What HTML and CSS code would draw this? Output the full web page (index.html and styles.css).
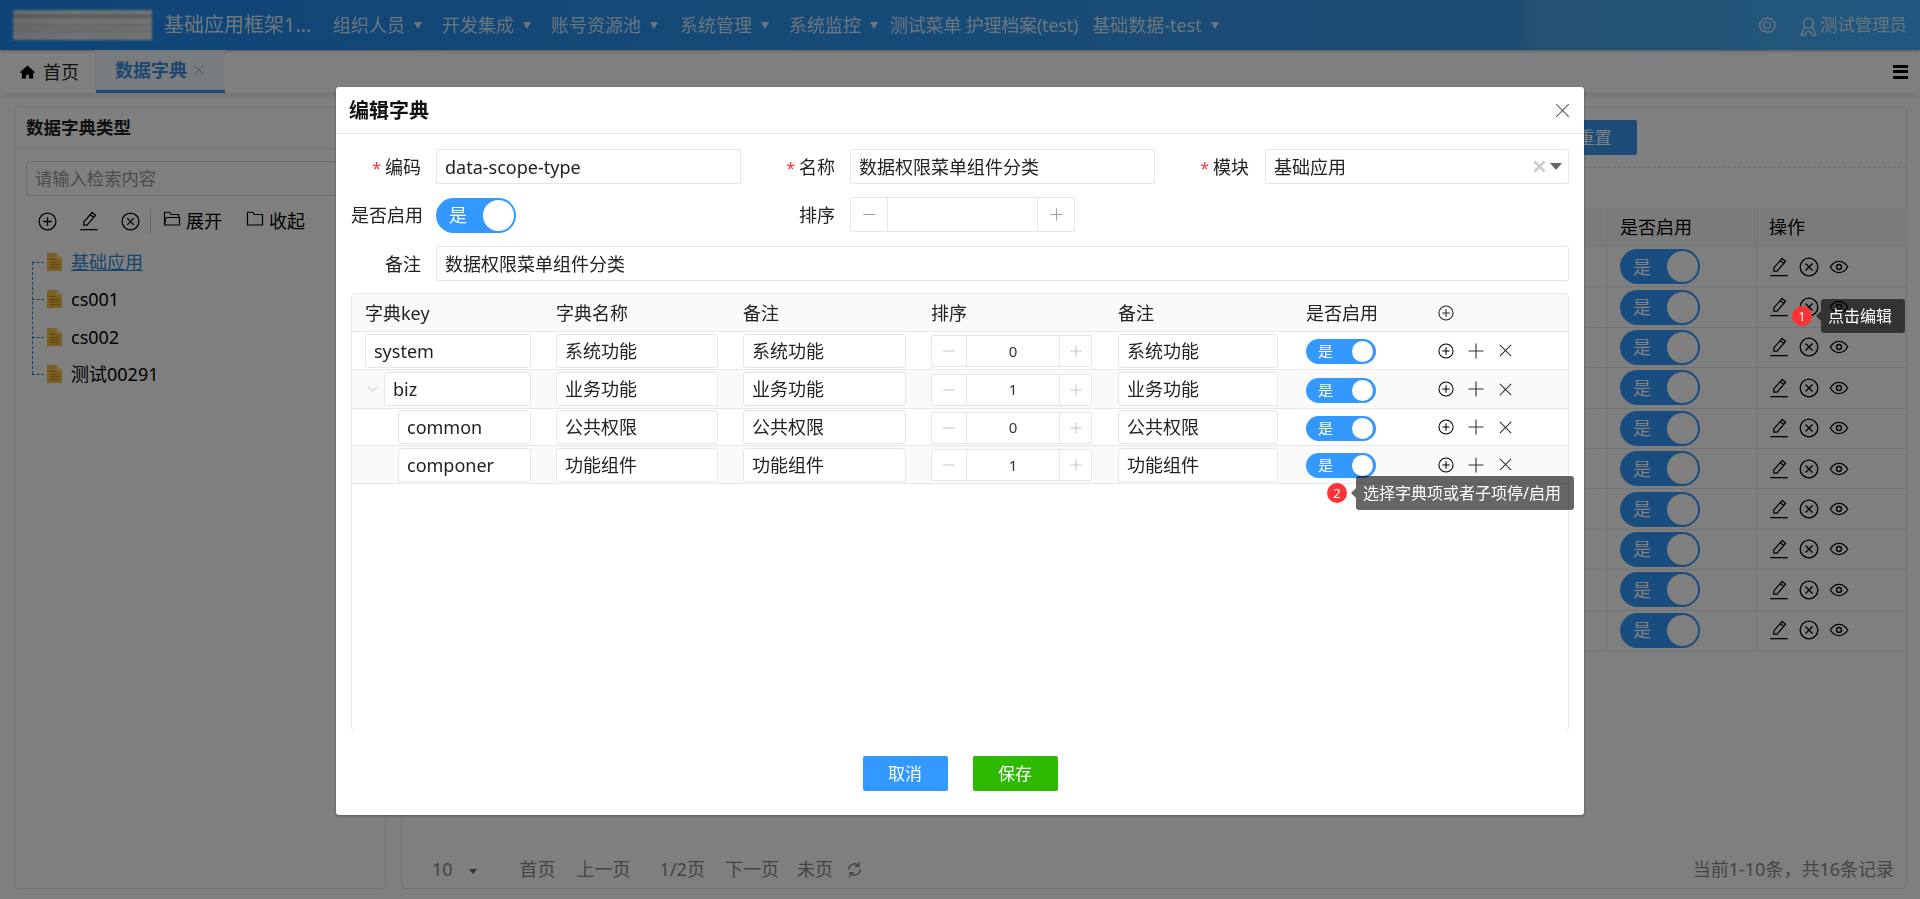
FILE: index.html
```html
<!DOCTYPE html>
<html lang="zh-CN">
<head>
<meta charset="utf-8">
<title>数据字典</title>
<link rel="stylesheet" href="styles.css">
</head>
<body>
<svg class="defs" width="0" height="0" aria-hidden="true">
  <symbol id="i-cplus" viewBox="0 0 24 24"><circle cx="12" cy="12" r="10.600" fill="none" stroke="currentColor" stroke-width="1.600"/><path d="M12 6.500v11M6.500 12h11" fill="none" stroke="currentColor" stroke-width="1.600"/></symbol>
  <symbol id="i-cx" viewBox="0 0 24 24"><circle cx="12" cy="12" r="10.600" fill="none" stroke="currentColor" stroke-width="1.600"/><path d="M7.800 7.800l8.400 8.400M16.200 7.800l-8.400 8.400" fill="none" stroke="currentColor" stroke-width="1.600"/></symbol>
  <symbol id="i-pen" viewBox="0 0 24 24"><path d="M15.800 1.800l4 3.400L9.600 17H5.800v-4zM13.600 4.400l4 3.400" fill="none" stroke="currentColor" stroke-width="1.500" stroke-linejoin="round"/><path d="M1.500 22.400h21" fill="none" stroke="currentColor" stroke-width="1.500"/></symbol>
  <symbol id="i-eye" viewBox="0 0 24 24"><path d="M1.500 12C4.500 7.400 8 5.200 12 5.200s7.500 2.200 10.500 6.800C19.500 16.600 16 18.800 12 18.800S4.500 16.600 1.500 12z" fill="none" stroke="currentColor" stroke-width="1.600"/><circle cx="12" cy="12" r="3" fill="none" stroke="currentColor" stroke-width="1.600"/></symbol>
  <symbol id="i-plus" viewBox="0 0 24 24"><path d="M12 2v20M2 12h20" fill="none" stroke="currentColor" stroke-width="1.500"/></symbol>
  <symbol id="i-minus" viewBox="0 0 24 24"><path d="M2 12h20" fill="none" stroke="currentColor" stroke-width="1.500"/></symbol>
  <symbol id="i-x" viewBox="0 0 24 24"><path d="M4 4l16 16M20 4L4 20" fill="none" stroke="currentColor" stroke-width="1.500"/></symbol>
  <symbol id="i-xb" viewBox="0 0 24 24"><path d="M4 4l16 16M20 4L4 20" fill="none" stroke="currentColor" stroke-width="4"/></symbol>
  <symbol id="i-open" viewBox="0 0 24 24"><path d="M2 20V3h7l2 3h10v4M2 20l2-10h18v10z" fill="none" stroke="currentColor" stroke-width="1.600" stroke-linejoin="round"/></symbol>
  <symbol id="i-folder" viewBox="0 0 24 24"><path d="M2 20V3h7l2 3h11v14z" fill="none" stroke="currentColor" stroke-width="1.600" stroke-linejoin="round"/></symbol>
  <symbol id="i-file" viewBox="0 0 16 18"><path d="M1 0h9.500L16 5v13H1z" fill="#f2c044"/><path d="M10.500 0v5H16z" fill="#ffe08a"/><path d="M4 6.500h5M4 9.500h9M4 12h9M4 14.500h9" stroke="#b98a1e" stroke-width="1"/></symbol>
  <symbol id="i-home" viewBox="0 0 16 16"><path d="M8 1L0.500 7.800V9H2v6H6.500v-4h3v4H14V9h1.500V7.800z" fill="currentColor"/></symbol>
  <symbol id="i-gear" viewBox="0 0 24 24"><path d="M12 1.800l3 2.200 3.700-.3 1.300 3.500 3 2.200-1.100 2.600 1.100 2-2.900 3.500-1.400 3.400-3.700-.2L12 22.200l-3-2.500-3.700.2-1.400-3.400L2 14l1.100-2-1.100-2.500 3-2.200 1.300-3.500 3.700.3z" fill="none" stroke="currentColor" stroke-width="1.900" stroke-linejoin="round"/><circle cx="12" cy="12" r="4.500" fill="none" stroke="currentColor" stroke-width="1.900"/></symbol>
  <symbol id="i-user" viewBox="0 0 20 24"><circle cx="10" cy="7.500" r="6" fill="none" stroke="currentColor" stroke-width="1.800"/><path d="M5.500 12L1 22l4 .5 3-5M14.500 12l4.500 10-4 .5-3-5M8 17.500h4" fill="none" stroke="currentColor" stroke-width="1.800" stroke-linejoin="round"/></symbol>
  <symbol id="i-refresh" viewBox="0 0 24 24"><path d="M20 12a8 8 0 0 1-13.500 5.800M4 12A8 8 0 0 1 17.500 6.200" fill="none" stroke="currentColor" stroke-width="2"/><path d="M18.500 1.500v6h-6M5.500 22.500v-6h6" fill="none" stroke="currentColor" stroke-width="2"/></symbol>
</svg>

<header class="topbar">
  <div class="logo"></div>
  <div class="app-title">基础应用框架1...</div>
  <nav class="nav">
    <span class="nav-item">组织人员<i class="caret"></i></span>
    <span class="nav-item">开发集成<i class="caret"></i></span>
    <span class="nav-item nav-wide">账号资源池<i class="caret"></i></span>
    <span class="nav-item">系统管理<i class="caret"></i></span>
    <span class="nav-item nav-tight">系统监控<i class="caret"></i></span>
    <span class="nav-item nav-plain">测试菜单 护理档案(test)</span>
    <span class="nav-item">基础数据-test<i class="caret"></i></span>
  </nav>
  <div class="top-right">
    <svg class="gear"><use href="#i-gear"/></svg>
    <svg class="user"><use href="#i-user"/></svg>
    <span>测试管理员</span>
  </div>
</header>

<div class="tabbar">
  <div class="tab-home"><svg class="home"><use href="#i-home"/></svg>首页</div>
  <div class="tab-active">数据字典<svg class="tab-x"><use href="#i-x"/></svg></div>
  <div class="burger"><b></b><b></b><b></b></div>
</div>

<main class="main">
  <aside class="panel side">
    <h2 class="side-title">数据字典类型</h2>
    <div class="search">请输入检索内容</div>
    <div class="side-tools">
      <svg class="ic19"><use href="#i-cplus"/></svg>
      <svg class="ic20"><use href="#i-pen"/></svg>
      <svg class="ic19"><use href="#i-cx"/></svg>
      <span class="tool-sep"></span>
      <span class="tool-btn"><svg><use href="#i-open"/></svg>展开</span>
      <span class="tool-btn"><svg><use href="#i-folder"/></svg>收起</span>
    </div>
    <ul class="tree">
      <li class="tree-item"><svg class="file"><use href="#i-file"/></svg><a class="tree-link">基础应用</a></li>
      <li class="tree-item"><svg class="file"><use href="#i-file"/></svg>cs001</li>
      <li class="tree-item"><svg class="file"><use href="#i-file"/></svg>cs002</li>
      <li class="tree-item"><svg class="file"><use href="#i-file"/></svg>测试00291</li>
    </ul>
  </aside>

  <section class="panel content">
    <div class="filters"><span class="btn btn-reset">重置</span></div>
    <div class="dash"></div>
    <div class="dtable">
      <div class="drow dhead"><span class="dfill"></span><span class="dc1">是否启用</span><span class="dc2">操作</span></div>
      <div class="drow"><span class="dfill"></span><span class="dc1"><span class="sw sw-lg">是</span></span><span class="dc2 acts"><svg class="ic20"><use href="#i-pen"/></svg><svg class="ic20"><use href="#i-cx"/></svg><svg class="ic20"><use href="#i-eye"/></svg></span></div>
      <div class="drow"><span class="dfill"></span><span class="dc1"><span class="sw sw-lg">是</span></span><span class="dc2 acts"><svg class="ic20"><use href="#i-pen"/></svg><svg class="ic20"><use href="#i-cx"/></svg><svg class="ic20"><use href="#i-eye"/></svg></span></div>
      <div class="drow"><span class="dfill"></span><span class="dc1"><span class="sw sw-lg">是</span></span><span class="dc2 acts"><svg class="ic20"><use href="#i-pen"/></svg><svg class="ic20"><use href="#i-cx"/></svg><svg class="ic20"><use href="#i-eye"/></svg></span></div>
      <div class="drow"><span class="dfill"></span><span class="dc1"><span class="sw sw-lg">是</span></span><span class="dc2 acts"><svg class="ic20"><use href="#i-pen"/></svg><svg class="ic20"><use href="#i-cx"/></svg><svg class="ic20"><use href="#i-eye"/></svg></span></div>
      <div class="drow"><span class="dfill"></span><span class="dc1"><span class="sw sw-lg">是</span></span><span class="dc2 acts"><svg class="ic20"><use href="#i-pen"/></svg><svg class="ic20"><use href="#i-cx"/></svg><svg class="ic20"><use href="#i-eye"/></svg></span></div>
      <div class="drow"><span class="dfill"></span><span class="dc1"><span class="sw sw-lg">是</span></span><span class="dc2 acts"><svg class="ic20"><use href="#i-pen"/></svg><svg class="ic20"><use href="#i-cx"/></svg><svg class="ic20"><use href="#i-eye"/></svg></span></div>
      <div class="drow"><span class="dfill"></span><span class="dc1"><span class="sw sw-lg">是</span></span><span class="dc2 acts"><svg class="ic20"><use href="#i-pen"/></svg><svg class="ic20"><use href="#i-cx"/></svg><svg class="ic20"><use href="#i-eye"/></svg></span></div>
      <div class="drow"><span class="dfill"></span><span class="dc1"><span class="sw sw-lg">是</span></span><span class="dc2 acts"><svg class="ic20"><use href="#i-pen"/></svg><svg class="ic20"><use href="#i-cx"/></svg><svg class="ic20"><use href="#i-eye"/></svg></span></div>
      <div class="drow"><span class="dfill"></span><span class="dc1"><span class="sw sw-lg">是</span></span><span class="dc2 acts"><svg class="ic20"><use href="#i-pen"/></svg><svg class="ic20"><use href="#i-cx"/></svg><svg class="ic20"><use href="#i-eye"/></svg></span></div>
      <div class="drow"><span class="dfill"></span><span class="dc1"><span class="sw sw-lg">是</span></span><span class="dc2 acts"><svg class="ic20"><use href="#i-pen"/></svg><svg class="ic20"><use href="#i-cx"/></svg><svg class="ic20"><use href="#i-eye"/></svg></span></div>
    </div>
    <footer class="pager">
      <span class="pg-size">10</span><i class="pg-caret"></i>
      <span class="pg-a">首页</span><span class="pg-b">上一页</span><span class="pg-c">1/2页</span><span class="pg-d">下一页</span><span class="pg-e">未页</span>
      <svg class="pg-refresh"><use href="#i-refresh"/></svg>
      <span class="pg-total">当前1-10条，共16条记录</span>
    </footer>
  </section>
</main>

<div class="mask"></div>

<div class="modal">
  <div class="modal-head"><h3>编辑字典</h3><svg class="modal-x"><use href="#i-x"/></svg></div>
  <div class="modal-body">
    <div class="form-grid">
      <div class="field"><label class="lab"><em>*</em>编码</label><div class="input">data-scope-type</div></div>
      <div class="field"><label class="lab"><em>*</em>名称</label><div class="input">数据权限菜单组件分类</div></div>
      <div class="field field-sel"><label class="lab"><em>*</em>模块</label><div class="input select">基础应用<svg class="sel-x"><use href="#i-xb"/></svg><i class="sel-caret"></i></div></div>
      <div class="field"><label class="lab">是否启用</label><span class="sw sw-lg sw-on">是</span></div>
      <div class="field"><label class="lab">排序</label><div class="num num-form"><span class="num-btn"><svg class="num-ic"><use href="#i-minus"/></svg></span><span class="num-val"></span><span class="num-btn"><svg class="num-ic"><use href="#i-plus"/></svg></span></div></div>
      <div class="field field-wide"><label class="lab">备注</label><div class="input">数据权限菜单组件分类</div></div>
    </div>

    <div class="grid">
      <div class="g-row g-head">
        <span class="g1">字典key</span><span class="g2">字典名称</span><span class="g3">备注</span><span class="g4">排序</span><span class="g5">备注</span><span class="g6">是否启用</span>
        <span class="g7"><svg class="ic16"><use href="#i-cplus"/></svg></span>
      </div>
      <div class="g-row">
        <span class="g1"><span class="input">system</span></span><span class="g2"><span class="input">系统功能</span></span><span class="g3"><span class="input">系统功能</span></span>
        <span class="g4"><span class="num"><span class="num-btn"><svg class="num-ic"><use href="#i-minus"/></svg></span><span class="num-val">0</span><span class="num-btn"><svg class="num-ic"><use href="#i-plus"/></svg></span></span></span>
        <span class="g5"><span class="input">系统功能</span></span><span class="g6"><span class="sw sw-sm">是</span></span>
        <span class="g7"><svg class="ic16"><use href="#i-cplus"/></svg><svg class="ic-add"><use href="#i-plus"/></svg><svg class="ic-del"><use href="#i-x"/></svg></span>
      </div>
      <div class="g-row">
        <span class="g1 g-lv1"><svg class="chev" viewBox="0 0 12 8"><path d="M1 1.500l5 5 5-5" fill="none" stroke="currentColor"/></svg><span class="input">biz</span></span><span class="g2"><span class="input">业务功能</span></span><span class="g3"><span class="input">业务功能</span></span>
        <span class="g4"><span class="num"><span class="num-btn"><svg class="num-ic"><use href="#i-minus"/></svg></span><span class="num-val">1</span><span class="num-btn"><svg class="num-ic"><use href="#i-plus"/></svg></span></span></span>
        <span class="g5"><span class="input">业务功能</span></span><span class="g6"><span class="sw sw-sm">是</span></span>
        <span class="g7"><svg class="ic16"><use href="#i-cplus"/></svg><svg class="ic-add"><use href="#i-plus"/></svg><svg class="ic-del"><use href="#i-x"/></svg></span>
      </div>
      <div class="g-row">
        <span class="g1 g-lv2"><span class="input">common</span></span><span class="g2"><span class="input">公共权限</span></span><span class="g3"><span class="input">公共权限</span></span>
        <span class="g4"><span class="num"><span class="num-btn"><svg class="num-ic"><use href="#i-minus"/></svg></span><span class="num-val">0</span><span class="num-btn"><svg class="num-ic"><use href="#i-plus"/></svg></span></span></span>
        <span class="g5"><span class="input">公共权限</span></span><span class="g6"><span class="sw sw-sm">是</span></span>
        <span class="g7"><svg class="ic16"><use href="#i-cplus"/></svg><svg class="ic-add"><use href="#i-plus"/></svg><svg class="ic-del"><use href="#i-x"/></svg></span>
      </div>
      <div class="g-row">
        <span class="g1 g-lv2"><span class="input">componer</span></span><span class="g2"><span class="input">功能组件</span></span><span class="g3"><span class="input">功能组件</span></span>
        <span class="g4"><span class="num"><span class="num-btn"><svg class="num-ic"><use href="#i-minus"/></svg></span><span class="num-val">1</span><span class="num-btn"><svg class="num-ic"><use href="#i-plus"/></svg></span></span></span>
        <span class="g5"><span class="input">功能组件</span></span><span class="g6"><span class="sw sw-sm">是</span></span>
        <span class="g7"><svg class="ic16"><use href="#i-cplus"/></svg><svg class="ic-add"><use href="#i-plus"/></svg><svg class="ic-del"><use href="#i-x"/></svg></span>
      </div>
    </div>
  </div>
  <div class="modal-foot"><span class="btn btn-blue">取消</span><span class="btn btn-green">保存</span></div>
</div>

<div class="tip tip-edit"><span class="badge">1</span><span class="tip-box">点击编辑</span></div>
<div class="tip tip-toggle"><span class="badge">2</span><span class="tip-box">选择字典项或者子项停/启用</span></div>
</body>
</html>
```

FILE: styles.css
```css
* { box-sizing: border-box; }
html, body { margin: 0; height: 899px; overflow: hidden; }
body {
  background: #fff;
  color: #000;
  font-family: "Noto Sans", "Noto Sans CJK SC", sans-serif;
  font-size: 18px;
  line-height: 1;
  display: flex;
  flex-direction: column;
}
.defs { position: absolute; }
svg { display: block; flex: none; }
h2, h3, ul { margin: 0; padding: 0; }
em { font-style: normal; }

/* top bar */
.topbar {
  height: 50px;
  flex: none;
  display: flex;
  align-items: center;
  color: #fff;
  background: linear-gradient(90deg, #1c88ee 0%, #2f98f0 50%, #3a9ae6 79%, #4aa6e8 80%, #42b0ff 100%);
  box-shadow: 0 1px 3px rgba(0,0,0,.3);
}
.logo {
  width: 139px;
  height: 30px;
  margin-left: 13px;
  background:
    linear-gradient(180deg, transparent 4px, rgba(70,70,70,.35) 5px, rgba(70,70,70,.3) 7px, transparent 9px),
    linear-gradient(180deg, transparent 13px, rgba(110,110,110,.25) 15px, transparent 18px, rgba(110,110,110,.2) 21px, transparent 24px),
    linear-gradient(90deg, #d2d6d8, #e8e8e8 45%, #dbe6de 72%, #ececec);
  filter: blur(1px);
}
.app-title { font-size: 20px; margin-left: 12px; width: 169px; white-space: nowrap; opacity: .86; }
.nav { display: flex; align-items: center; white-space: nowrap; }
.nav-item { display: flex; align-items: center; padding-right: 20px; opacity: .8; }
.nav-wide { padding-right: 22px; }
.nav-tight { padding-right: 12px; }
.nav-plain { padding-right: 14px; letter-spacing: -.2px; }
.caret {
  margin-left: 9px;
  border-top: 7px solid currentColor;
  border-left: 4.500px solid transparent;
  border-right: 4.500px solid transparent;
}
.top-right { margin-left: auto; margin-right: 13px; display: flex; align-items: center; opacity: .72; font-size: 17.400px; }
.gear { width: 18px; height: 18px; margin-right: 24px; }
.user { width: 17px; height: 20px; margin-right: 3px; margin-top: 3px; }

/* tab bar */
.tabbar {
  height: 43px;
  flex: none;
  display: flex;
  align-items: stretch;
  position: relative;
  box-shadow: 0 2px 6px rgba(0,0,0,.12);
}
.tab-home { width: 96px; display: flex; align-items: center; padding-left: 20px; gap: 8px; color: #222; border-right: 1px solid #eee; }
.home { width: 15px; height: 16px; color: #000; }
.tab-active {
  width: 129px;
  display: flex;
  align-items: center;
  padding-left: 19px;
  gap: 5px;
  font-weight: 700;
  color: #3a8fe0;
  background: #f2f8fd;
  border-bottom: 3px solid #3a94ea;
}
.tab-x { width: 14px; height: 14px; color: #7ab0e0; }
.burger { margin-left: auto; margin-right: 12px; width: 15px; display: flex; flex-direction: column; justify-content: center; gap: 2.500px; }
.burger b { display: block; height: 3px; background: #000; }

/* main */
.main { flex: 1; min-height: 0; display: flex; gap: 15px; padding: 13px 13px 10px 14px; }
.panel { border: 1px solid #e6e6e6; border-radius: 5px; background: #fff; min-height: 0; }
.side { width: 372px; flex: none; }
.side-title { height: 42px; padding-top: 1px; display: flex; align-items: center; padding-left: 11px; font-size: 17.500px; font-weight: 700; color: #222; border-bottom: 1px solid #eee; }
.search { height: 35px; margin: 12px 10px 0 11px; padding-left: 8px; display: flex; align-items: center; color: #999; border: 1px solid #ddd; border-radius: 3px; font-size: 17.300px; }
.side-tools { height: 26px; margin: 12px 0 0 23px; display: flex; align-items: center; gap: 22px; }
.tool-sep { width: 1px; height: 24px; background: #ccc; margin: 0 -10px 0 -12px; }
.tool-btn { display: flex; align-items: center; gap: 5px; margin-right: 2px; }
.tool-btn svg { width: 18px; height: 18px; margin-top: -4px; }
.ic19 { width: 19px; height: 19px; }
.ic20 { width: 20px; height: 20px; }
.ic16 { width: 16px; height: 16px; }
.ic-add { width: 18px; height: 18px; margin-left: -1px; color: #333; }
.ic-del { width: 17px; height: 17px; margin-left: -2px; color: #333; }
.tree { list-style: none; margin: 9px 0 0 17px; position: relative; }
.tree::before { content: ""; position: absolute; left: 0; top: 19px; bottom: 19px; border-left: 1px dashed #2c82d0; }
.tree-item { height: 37.500px; padding-left: 14px; display: flex; align-items: center; position: relative; }
.tree-item::before { content: ""; position: absolute; left: 0; top: 50%; width: 12px; border-top: 1px dashed #2c82d0; }
.file { width: 16px; height: 18px; margin-right: 9px; }
.tree-link { color: #2d8be0; text-decoration: underline; }

/* content */
.content { flex: 1; min-width: 0; display: flex; flex-direction: column; }
.filters { height: 60px; padding: 13px 269px 0 0; display: flex; justify-content: flex-end; flex: none; }
.btn { width: 85px; height: 35px; display: flex; align-items: center; justify-content: center; color: #fff; border-radius: 2px; font-size: 17px; }
.btn-reset { background: #3a98f0; }
.dash { border-top: 1px dashed #ddd; flex: none; }
.dtable { margin-top: 40px; flex: none; }
.drow { display: flex; height: 40.400px; align-items: center; border-bottom: 1px solid #e8e8e8; }
.dhead { height: 39px; background: #f6f6f6; }
.dfill { flex: 1; }
.dc1, .dc2 { height: 100%; display: flex; align-items: center; border-left: 1px solid #e8e8e8; }
.dc1 { width: 151px; padding-left: 13px; }
.dc2 { width: 149px; padding-left: 11px; }
.acts { gap: 10px; }
.pager { margin-top: auto; height: 38px; padding: 0 12px 0 30px; display: flex; align-items: center; color: #888; flex: none; font-size: 18px; }
.pg-caret { margin: 4px 43px 0 16px; border-top: 5px solid #666; border-left: 4px solid transparent; border-right: 4px solid transparent; }
.pg-b { margin-left: 21px; }
.pg-c { margin-left: 29px; }
.pg-d { margin-left: 20px; }
.pg-e { margin-left: 18px; }
.pg-refresh { width: 17px; height: 17px; margin-left: 13px; }
.pg-total { margin-left: auto; }

/* overlay */
.mask { position: fixed; inset: 0; background: rgba(0,0,0,.5); }

/* modal */
.modal {
  position: fixed;
  left: 336px;
  top: 87px;
  width: 1248px;
  height: 728px;
  display: flex;
  flex-direction: column;
  background: #fff;
  border-radius: 3px;
  box-shadow: 0 1px 3px rgba(0,0,0,.35);
}
.modal-head { height: 47px; flex: none; display: flex; align-items: center; justify-content: space-between; padding: 1px 12px 0 13px; border-bottom: 1px solid #e8e8e8; }
.modal-head h3 { font-size: 20px; font-weight: 700; color: #111; }
.modal-x { width: 19px; height: 19px; color: #666; }
.modal-body { flex: none; padding: 15px 15px 0; }
.form-grid { display: grid; grid-template-columns: repeat(3, 390px); column-gap: 24px; row-gap: 13.500px; }
.field { display: flex; align-items: center; gap: 15px; height: 35px; }
.field-wide { grid-column: 1 / -1; }
.field-sel { gap: 16px; }
.lab { width: 70px; flex: none; text-align: right; white-space: nowrap; color: #222; }
.lab em { color: #f33; margin-right: 4px; font-size: 16px; }
.input {
  flex: 1;
  min-width: 0;
  height: 35px;
  display: flex;
  align-items: center;
  padding-left: 8px;
  color: #222;
  background: #fff;
  border: 1px solid #e4e6ef;
  border-radius: 2px;
  overflow: hidden;
  white-space: nowrap;
}
.select { position: relative; }
.sel-x { width: 15px; height: 15px; color: #ccc; margin-left: auto; margin-right: 3px; }
.sel-caret { margin-right: 6px; border-top: 7px solid #666; border-left: 6px solid transparent; border-right: 6px solid transparent; }

.sw { display: flex; align-items: center; background: #39f; color: #fff; border-radius: 18px; position: relative; }
.sw::after { content: ""; position: absolute; background: #fff; border-radius: 50%; }
.sw-lg { width: 80px; height: 35px; padding-left: 13px; }
.sw-lg::after { width: 31px; height: 31px; right: 2px; top: 2px; }
.sw-sm { width: 70px; height: 25px; padding-left: 12px; font-size: 15px; margin-top: 2px; }
.sw-sm::after { width: 21px; height: 21px; right: 3px; top: 2px; }

.num { flex: 1; display: flex; align-items: stretch; height: 32px; margin-top: 1px; background: #fff; border: 1px solid #e4e6ef; border-radius: 2px; }
.num-form { flex: none; width: 225px; height: 35px; margin-top: -1px; }
.num-btn { width: 35px; flex: none; display: flex; align-items: center; justify-content: center; color: #bbb; }
.num-btn:first-child { border-right: 1px solid #e4e6ef; }
.num-btn:last-child { border-left: 1px solid #e4e6ef; width: 32px; }
.num-form .num-btn { color: #999; width: 37px; }
.num-form .num-ic { width: 15px; height: 15px; }
.num-ic { width: 14px; height: 14px; }
.num-val { flex: 1; display: flex; align-items: center; justify-content: center; font-size: 15px; color: #333; }

/* editable grid */
.grid { margin-top: 12px; height: 439px; border: 1px solid #e8e8e8; border-bottom: 0; border-radius: 5px; overflow: hidden; }
.g-row { display: flex; align-items: center; height: 38px; padding-left: 13px; border-bottom: 1px solid #e8e8e8; }
.g-row:nth-child(odd) { background: #fafafa; }
.g-row:nth-child(3) { height: 39px; }
.g-row:nth-child(4) { height: 37px; }
.g-head { height: 38px; background: #f7f7f7; color: #222; }
.g1, .g2, .g3, .g4, .g5, .g6, .g7 { display: flex; align-items: center; flex: none; padding-right: 25px; }
.g1 { width: 191px; }
.g2 { width: 187px; }
.g3 { width: 188px; }
.g4 { width: 187px; padding-right: 26px; }
.g5 { width: 188px; padding-right: 28px; }
.g6 { width: 132px; padding-right: 0; }
.g7 { gap: 14px; padding-right: 0; }
.g-row .input { height: 34px; border-radius: 3px; }
.g-lv1 { padding-left: 2px; }
.chev { width: 11px; height: 8px; color: #bbb; margin-right: 6px; }
.g-lv2 { padding-left: 33px; }

.modal-foot { margin-top: 24px; display: flex; justify-content: center; gap: 25px; }
.btn-blue { background: #39f; }
.btn-green { background: #2dba00; }

/* tips */
.tip { position: fixed; display: flex; align-items: center; }
.tip-edit { left: 1792px; top: 299px; }
.tip-toggle { left: 1327px; top: 476px; }
.badge { width: 20px; height: 20px; border-radius: 50%; background: #f33; color: #fff; font-size: 13px; display: flex; align-items: center; justify-content: center; position: relative; z-index: 1; margin-right: 9px; }
.tip-box { height: 34px; padding: 0 13px 0 7px; display: flex; align-items: center; background: rgba(0,0,0,.6); color: #fff; font-size: 16px; border-radius: 3px; position: relative; white-space: nowrap; }
.tip-box::before { content: ""; position: absolute; left: -5px; top: 12px; border-right: 5px solid rgba(0,0,0,.6); border-top: 5px solid transparent; border-bottom: 5px solid transparent; }
```
